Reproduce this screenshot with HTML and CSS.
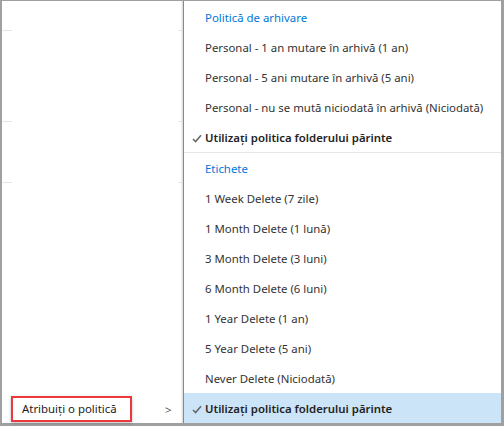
FILE: index.html
```html
<!DOCTYPE html>
<html lang="ro">
<head>
    <meta charset="UTF-8">
    <title>Atribuiți o politică</title>
    <link rel="stylesheet" href="styles.css">
</head>
<body>

    <div class="frame">
        <div class="side">
            <div class="side-row"></div>
            <div class="side-row tall"></div>
            <div class="side-row mid"></div>
            <div class="side-fill"></div>
            <div class="assign">
                <span class="assign-label">Atribuiți o politică</span>
                <span class="chevron">&gt;</span>
            </div>
        </div>

        <div class="menu">
            <div class="menu-head">Politică de arhivare</div>
            <div class="menu-item">Personal - 1 an mutare în arhivă (1 an)</div>
            <div class="menu-item">Personal - 5 ani mutare în arhivă (5 ani)</div>
            <div class="menu-item">Personal - nu se mută niciodată în arhivă (Niciodată)</div>
            <div class="menu-item checked">
                <svg class="check" width="10" height="9" viewBox="0 0 10 9"><path d="M1 5 L3.6 7.6 L9 1.2" fill="none" stroke="#666" stroke-width="1.5"/></svg>
                Utilizați politica folderului părinte
            </div>
            <div class="menu-sep"></div>
            <div class="menu-head">Etichete</div>
            <div class="menu-item">1 Week Delete (7 zile)</div>
            <div class="menu-item">1 Month Delete (1 lună)</div>
            <div class="menu-item">3 Month Delete (3 luni)</div>
            <div class="menu-item">6 Month Delete (6 luni)</div>
            <div class="menu-item">1 Year Delete (1 an)</div>
            <div class="menu-item">5 Year Delete (5 ani)</div>
            <div class="menu-item">Never Delete (Niciodată)</div>
            <div class="menu-item checked active">
                <svg class="check" width="10" height="9" viewBox="0 0 10 9"><path d="M1 5 L3.6 7.6 L9 1.2" fill="none" stroke="#666" stroke-width="1.5"/></svg>
                Utilizați politica folderului părinte
            </div>
        </div>
    </div>

</body>
</html>
```

FILE: styles.css
```css
* {
    box-sizing: border-box;
}
body {
    margin: 0;
    font-family: "Noto Sans", "Open Sans", sans-serif;
    font-size: 11.4px;
    color: #333;
}
.frame {
    display: flex;
    width: 504px;
    height: 426px;
    border-style: solid;
    border-color: #a0a0a0;
    border-width: 1px 3px 3px 2px;
    background: #fff;
}
.side {
    width: 181px;
    display: flex;
    flex-direction: column;
    box-shadow: inset -2px 0 2px -1px rgba(0, 0, 0, 0.18);
}
.side-row {
    height: 30px;
    border-bottom: 1px solid #e6e6e6;
    position: relative;
}
.side-row.tall {
    height: 91px;
}
.side-row.mid {
    height: 61px;
}
.side-row::before {
    content: "";
    position: absolute;
    left: 10px;
    right: 5px;
    bottom: -1px;
    height: 1px;
    background: #fff;
}
.side-fill {
    flex: 1;
}
.assign {
    display: flex;
    align-items: center;
    height: 28px;
}
.assign-label {
    margin-left: 9px;
    width: 121px;
    height: 26px;
    line-height: 22px;
    padding-left: 9px;
    border: 2px solid #e8393f;
    box-shadow: 0 1px 3px rgba(0, 0, 0, 0.25);
    color: #222;
}
.chevron {
    margin-left: 33px;
    color: #555;
}
.menu {
    flex: 1;
    border-left: 1px solid #8a8a8a;
    padding-top: 1px;
}
.menu-head,
.menu-item {
    height: 30px;
    line-height: 26px;
    padding-top: 3px;
    padding-left: 21px;
    white-space: nowrap;
}
.menu-head {
    color: #0078d7;
}
.menu-item.checked {
    position: relative;
    font-weight: 600;
    color: #222;
}
.check {
    position: absolute;
    left: 8px;
    top: 12px;
}
.menu-sep {
    height: 1px;
    background: #e6e6e6;
}
.menu-item.active {
    background: #cce4f7;
}
```
